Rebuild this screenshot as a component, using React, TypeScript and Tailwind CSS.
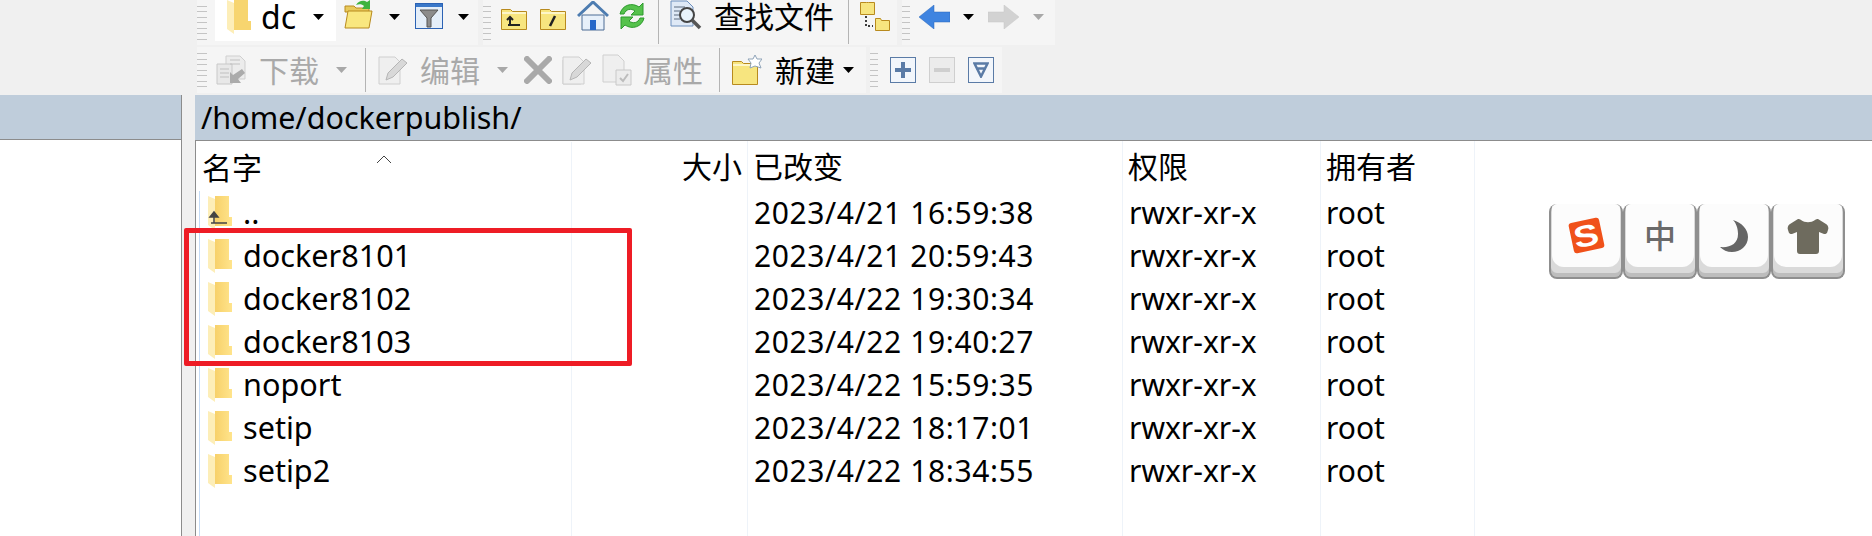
import type { ReactNode } from 'react';

const FONT = "font-['Noto_Sans','Noto_Sans_CJK_SC',sans-serif]";

const files = [
  { name: '..', date: '2023/4/21 16:59:38', up: true },
  { name: 'docker8101', date: '2023/4/21 20:59:43' },
  { name: 'docker8102', date: '2023/4/22 19:30:34' },
  { name: 'docker8103', date: '2023/4/22 19:40:27' },
  { name: 'noport', date: '2023/4/22 15:59:35' },
  { name: 'setip', date: '2023/4/22 18:17:01' },
  { name: 'setip2', date: '2023/4/22 18:34:55' },
];

const COLS = 'grid grid-cols-[376px_176px_375px_198px_154px_1fr]';

function Grip() {
  return (
    <div className="flex h-[34px] w-[10px] shrink-0 flex-col justify-between">
      {[0, 1, 2, 3, 4, 5, 6].map((i) => (
        <div key={i} className="h-px bg-[#c4c4c4]" />
      ))}
    </div>
  );
}

function Caret({ off, className = '' }: { off?: boolean; className?: string }) {
  return (
    <svg width="11" height="6" viewBox="0 0 11 6" className={`shrink-0 ${className}`}>
      <path d="M0 0h11L5.5 6z" fill={off ? '#a8a8a8' : '#000'} />
    </svg>
  );
}

function Sep() {
  return <div className="h-[44px] w-px shrink-0 bg-[#b4b4b4]" />;
}

function ListFolder({ children }: { children?: ReactNode }) {
  return (
    <svg width="24" height="34" viewBox="0 0 24 34" className="shrink-0">
      <defs>
        <linearGradient id="lf" x1="0" y1="0" x2="1" y2="0">
          <stop offset="0" stopColor="#f4c95c" />
          <stop offset="1" stopColor="#ffe48c" />
        </linearGradient>
      </defs>
      <path d="M0 0h21v21h3v9H7V0z" fill="url(#lf)" />
      <path d="M0 0l7 3v31l-7-5z" fill="#fdeeb8" />
      {children}
    </svg>
  );
}

function YellowFolder({ mark }: { mark?: ReactNode }) {
  return (
    <svg width="26" height="24" viewBox="0 0 26 24" className="shrink-0">
      <path d="M.5 3.500h9l2 2h14v18H.5z" fill="#f7e57f" stroke="#b88a1e" />
      <path d="M1 7h24" stroke="#fdf6c8" strokeWidth="2" />
      {mark}
    </svg>
  );
}

function OpenFolder() {
  return (
    <svg width="30" height="29" viewBox="0 0 30 29" className="shrink-0">
      <path d="M1 6h9l2 2h13v4H1z" fill="#e8c95a" stroke="#b88a1e" />
      <path d="M1 28l3-17h24l-3 17z" fill="#f9e77f" stroke="#b88a1e" />
      <path d="M12 5c3-5 8-5 11-3l3-2v9h-8l2-3c-2-2-5-2-8-1z" fill="#3eb33e" />
    </svg>
  );
}

function FilterIcon() {
  return (
    <svg width="28" height="26" viewBox="0 0 28 26" className="shrink-0">
      <rect x=".5" y=".5" width="27" height="25" fill="#e4eef9" stroke="#2b62b4" />
      <path d="M1 1h26v3H1z" fill="#3a78c9" />
      <path d="M5 7h18l-7 8v9h-4v-9z" fill="#8c8c8c" stroke="#555" />
    </svg>
  );
}

function HomeIcon() {
  return (
    <svg width="32" height="30" viewBox="0 0 32 30" className="shrink-0">
      <path d="M5 14h22v15H5z" fill="#e7f0fa" stroke="#4d6d95" />
      <path d="M1 15L16 1l15 14" fill="none" stroke="#4d7cb0" strokeWidth="3" />
      <path d="M13 19h6v10h-6z" fill="#2668c9" />
    </svg>
  );
}

function RefreshIcon() {
  return (
    <svg width="30" height="30" viewBox="0 0 30 30" className="shrink-0">
      <path d="M3 13C5 4 15 1 22 6l4-4v12H14l4-4c-4-3-9-2-11 3z" fill="#55c24c" stroke="#2d9a2d" />
      <path d="M27 17c-2 9-12 12-19 7l-4 4V16h12l-4 4c4 3 9 2 11-3z" fill="#55c24c" stroke="#2d9a2d" />
    </svg>
  );
}

function SearchDoc() {
  return (
    <svg width="32" height="31" viewBox="0 0 32 31" className="shrink-0">
      <path d="M1 1h16l6 6v19H1z" fill="#dfe9f6" stroke="#6d8fbd" />
      <path d="M4 7h11M4 11h6M4 15h5M4 19h6" stroke="#5c6c80" />
      <circle cx="17" cy="15" r="7" fill="#e9f3fb" stroke="#444" strokeWidth="2" />
      <path d="M22 20l8 8" stroke="#555" strokeWidth="3.500" />
    </svg>
  );
}

function TreeIcon() {
  return (
    <svg width="30" height="30" viewBox="0 0 30 30" className="shrink-0">
      <path d="M.5 1.500h6l2 0h6v12H.5z" fill="#f7e57f" stroke="#b88a1e" />
      <path d="M15.500 17.500h5l1 2h8v10h-14z" fill="#f7e57f" stroke="#b88a1e" />
      <path d="M6 15v10h7" fill="none" stroke="#000" strokeDasharray="2 2" strokeWidth="1.500" />
    </svg>
  );
}

function HArrow({ off, flip }: { off?: boolean; flip?: boolean }) {
  return (
    <svg width="31" height="24" viewBox="0 0 31 24" className={`shrink-0 ${flip ? '-scale-x-100' : ''}`}>
      <path
        d="M0 12L15 0v7h16v10H15v7z"
        fill={off ? '#d2d2d2' : '#3f84e0'}
        stroke={off ? '#c6c6c6' : '#2a66b8'}
        strokeWidth=".5"
      />
    </svg>
  );
}

function DownloadIcon() {
  return (
    <svg width="30" height="30" viewBox="0 0 30 30" className="shrink-0">
      <path d="M10 1h14l5 5v18H10z" fill="#ececec" stroke="#cfcfcf" />
      <path d="M1 9h15v20H1z" fill="#e8e8e8" stroke="#c8c8c8" />
      <path d="M4 14h9M4 18h9M4 22h9M14 5h10M14 9h10" stroke="#c0c0c0" />
      <path d="M26 14l3 4-7 6 3 4H14V17l3 3z" fill="#ababab" />
    </svg>
  );
}

function EditIcon({ back }: { back?: boolean }) {
  return (
    <svg width="30" height="29" viewBox="0 0 30 29" className="shrink-0">
      {back && <path d="M1 4v24h18" fill="none" stroke="#cfcfcf" />}
      <path d="M1 1h16l5 5v22H1z" fill="#efefef" stroke="#cfcfcf" />
      <path d="M8 24l2-7L24 3l5 4-14 14z" fill="#d8d8d8" stroke="#b5b5b5" />
    </svg>
  );
}

function PropsIcon() {
  return (
    <svg width="30" height="32" viewBox="0 0 30 32" className="shrink-0">
      <path d="M1 1h15l6 6v21H1z" fill="#efefef" stroke="#cfcfcf" />
      <path d="M14 16h15v15H14z" fill="#ececec" stroke="#c8c8c8" />
      <path d="M18 24l3 3 5-7" fill="none" stroke="#bcbcbc" strokeWidth="2" />
    </svg>
  );
}

function CrossIcon() {
  return (
    <svg width="28" height="28" viewBox="0 0 28 28" className="shrink-0">
      <path d="M3 3l22 22M25 3L3 25" stroke="#a9a9a9" strokeWidth="6" strokeLinecap="round" />
    </svg>
  );
}

function NewFolder() {
  return (
    <svg width="30" height="30" viewBox="0 0 30 30" className="shrink-0">
      <path d="M.5 6.500h9l2 2h14v21H.5z" fill="#f7e57f" stroke="#b88a1e" />
      <path d="M1 10h24" stroke="#fdf6c8" strokeWidth="2" />
      <path d="M23 0l2 4 5 0-3 4 2 5-6-2-5 2 1-5-3-4 5 0z" fill="#fff" stroke="#8ea3b8" />
    </svg>
  );
}

function BoxBtn({ off, children }: { off?: boolean; children: ReactNode }) {
  return (
    <div
      className={`flex h-[26px] w-[26px] shrink-0 items-center justify-center border ${
        off ? 'border-[#cfcfcf] bg-[#ececec]' : 'border-[#5a7ba6] bg-[#f2f6fb]'
      }`}
    >
      {children}
    </div>
  );
}

function KeyCap({ children }: { children: ReactNode }) {
  return (
    <div className="flex h-[75px] w-[74px] shrink-0 items-start justify-center overflow-hidden rounded-[8px] border-x-2 border-b-2 border-[#8f8f8f] bg-[#dadada] shadow-[inset_0_-4px_0_#bdbdbd]">
      <div className="flex h-[63px] w-[68px] items-center justify-center rounded-b-[12px] bg-[#fcfcfc]">{children}</div>
    </div>
  );
}

export default function App() {
  return (
    <div className={`flex h-[536px] w-[1872px] flex-col overflow-hidden bg-[#f0f0f0] text-black ${FONT}`}>
      {/* toolbars */}
      <div className="h-[95px] shrink-0 pl-[197px]">
        <div className="flex h-[47px] items-start">
          <div className="flex h-[45px] w-[281px] items-center bg-[#f5f5f5]">
            <Grip />
            <div className="ml-2 flex h-[41px] w-[121px] -translate-y-[2px] items-start bg-white pl-3">
              <svg width="24" height="34" viewBox="0 0 24 34" className="shrink-0">
                <path d="M0 0h21v21h3v9H7V0z" fill="#f7d56f" />
                <path d="M0 0l7 3v31l-7-5z" fill="#fdeeb8" />
              </svg>
              <span className="ml-[10px] mt-[1px] text-[32px] leading-[32px]">dc</span>
            </div>
            <Caret className="-ml-[23px] -translate-y-[6px]" />
            <div className="ml-[20px] -translate-y-[8px]">
              <OpenFolder />
            </div>
            <Caret className="ml-[15px] -translate-y-[6px]" />
            <div className="ml-[15px] -translate-y-[7px]">
              <FilterIcon />
            </div>
            <Caret className="ml-[15px] -translate-y-[6px]" />
          </div>
          <div className="ml-[5px] flex h-[45px] w-[414px] items-center bg-[#f5f5f5]">
            <div className="w-[8px] overflow-hidden">
              <Grip />
            </div>
            <div className="ml-[10px] -translate-y-[5px]">
              <YellowFolder mark={<path d="M7 19h12M9 11v8M6 14l3-3 3 3" fill="none" stroke="#222" strokeWidth="2" />} />
            </div>
            <div className="ml-[13px] -translate-y-[5px]">
              <YellowFolder mark={<path d="M10 20l5-10" stroke="#222" strokeWidth="2.500" />} />
            </div>
            <div className="ml-[11px] -translate-y-[7px]">
              <HomeIcon />
            </div>
            <div className="ml-[8px] -translate-y-[7px]">
              <RefreshIcon />
            </div>
            <div className="ml-[11px] -translate-y-[1px]">
              <Sep />
            </div>
            <div className="ml-[11px] -translate-y-[7px]">
              <SearchDoc />
            </div>
            <span className="ml-[12px] -translate-y-[6px] text-[30px] leading-[30px]">查找文件</span>
            <div className="ml-[14px] -translate-y-[1px]">
              <Sep />
            </div>
            <div className="ml-[11px] -translate-y-[7px]">
              <TreeIcon />
            </div>
          </div>
          <div className="ml-[5px] flex h-[45px] w-[153px] items-center bg-[#f5f5f5]">
            <div className="w-[8px] overflow-hidden">
              <Grip />
            </div>
            <div className="ml-[9px] -translate-y-[6px]">
              <HArrow />
            </div>
            <Caret className="ml-[13px] -translate-y-[6px]" />
            <div className="ml-[14px] -translate-y-[6px]">
              <HArrow off flip />
            </div>
            <Caret off className="ml-[14px] -translate-y-[6px]" />
          </div>
        </div>
        <div className="flex h-[46px] items-center">
          <div className="flex h-[46px] w-[669px] items-center bg-[#f5f5f5] text-[#a9a9a9]">
            <Grip />
            <div className="ml-[9px]">
              <DownloadIcon />
            </div>
            <span className="ml-[13px] translate-y-[1px] text-[30px] leading-[36px]">下载</span>
            <Caret off className="ml-[17px]" />
            <div className="ml-[18px]">
              <Sep />
            </div>
            <div className="ml-[12px]">
              <EditIcon />
            </div>
            <span className="ml-[12px] translate-y-[1px] text-[30px] leading-[36px]">编辑</span>
            <Caret off className="ml-[17px]" />
            <div className="ml-[16px]">
              <CrossIcon />
            </div>
            <div className="ml-[10px]">
              <EditIcon back />
            </div>
            <div className="ml-[10px]">
              <PropsIcon />
            </div>
            <span className="ml-[11px] translate-y-[1px] text-[30px] leading-[36px]">属性</span>
            <div className="ml-[16px]">
              <Sep />
            </div>
            <div className="ml-[12px]">
              <NewFolder />
            </div>
            <span className="ml-[13px] translate-y-[1px] text-[30px] leading-[36px] text-black">新建</span>
            <Caret className="ml-[8px]" />
          </div>
          <div className="ml-[4px] flex h-[46px] w-[132px] items-center bg-[#f5f5f5]">
            <div className="w-[8px] overflow-hidden">
              <Grip />
            </div>
            <div className="ml-[12px]">
              <BoxBtn>
                <div className="relative h-[16px] w-[16px]">
                  <div className="absolute left-0 top-[6px] h-[4px] w-[16px] bg-[#5a7ba6]" />
                  <div className="absolute left-[6px] top-0 h-[16px] w-[4px] bg-[#5a7ba6]" />
                </div>
              </BoxBtn>
            </div>
            <div className="ml-[13px]">
              <BoxBtn off>
                <div className="h-[4px] w-[16px] bg-[#cfcfcf]" />
              </BoxBtn>
            </div>
            <div className="ml-[13px]">
              <BoxBtn>
                <svg width="16" height="16" viewBox="0 0 16 16">
                  <path d="M1.500 1.500h13L8 14.500zM3 6.500h10" fill="none" stroke="#5a7ba6" strokeWidth="2.500" />
                </svg>
              </BoxBtn>
            </div>
          </div>
        </div>
      </div>

      {/* panes */}
      <div className="flex min-h-0 flex-1">
        <div className="flex w-[182px] shrink-0 flex-col border-r border-[#8c8c8c]">
          <div className="h-[45px] shrink-0 border-b border-[#8c8c8c] bg-[#bfcddb]" />
          <div className="flex-1 bg-white" />
        </div>
        <div className="w-[13px] shrink-0" />
        <div className="relative flex min-w-0 flex-1 flex-col">
          <div className="flex h-[46px] shrink-0 items-center border-b border-[#8c8c8c] bg-[#bfcddb] pl-[6px] text-[30.5px] leading-none">
            /home/dockerpublish/
          </div>
          <div className="flex min-h-0 flex-1 flex-col border-l border-[#8c8c8c] bg-white">
            <div className={`${COLS} h-[50px] shrink-0 items-stretch text-[30px]`}>
              <div className="relative flex translate-y-[1px] items-center border-r border-[#eef3f9] pl-[6px]">
                名字
                <svg width="16" height="9" viewBox="0 0 16 9" className="absolute left-[180px] top-[13px]">
                  <path d="M1 8l7-7 7 7" fill="none" stroke="#444" />
                </svg>
              </div>
              <div className="flex items-center justify-end border-r border-[#eef3f9] pr-[5px]">大小</div>
              <div className="flex items-center border-r border-[#eef3f9] pl-[5px]">已改变</div>
              <div className="flex items-center border-r border-[#eef3f9] pl-[5px]">权限</div>
              <div className="flex items-center border-r border-[#eef3f9] pl-[5px]">拥有者</div>
              <div />
            </div>
            {files.map((f) => (
              <div key={f.name} className={`${COLS} h-[43px] shrink-0 text-[30px] leading-none`}>
                <div className="flex items-center border-r border-[#eef3f9]">
                  <div className="ml-[3px] h-full w-px bg-[#c5dcf7]" />
                  <div className="ml-[8px]">
                    <ListFolder>
                      {f.up && <path d="M3 27h16M6 27V17M2 21l4-5 4 5z" fill="#444" stroke="#444" strokeWidth="1.500" />}
                    </ListFolder>
                  </div>
                  <span className="ml-[11px] text-[30.6px]">{f.name}</span>
                </div>
                <div className="border-r border-[#eef3f9]" />
                <div className="flex items-center border-r border-[#eef3f9] pl-[6px] tracking-[0.6px]">{f.date}</div>
                <div className="flex items-center border-r border-[#eef3f9] pl-[6px]">rwxr-xr-x</div>
                <div className="flex items-center border-r border-[#eef3f9] pl-[5px]">root</div>
                <div />
              </div>
            ))}
            <div className={`${COLS} min-h-0 flex-1`}>
              <div className="border-r border-[#eef3f9]">
                <div className="ml-[3px] h-full w-px bg-[#c5dcf7]" />
              </div>
              <div className="border-r border-[#eef3f9]" />
              <div className="border-r border-[#eef3f9]" />
              <div className="border-r border-[#eef3f9]" />
              <div className="border-r border-[#eef3f9]" />
              <div />
            </div>
          </div>

          {/* red highlight around the three docker folders */}
          <div className="absolute left-[-11px] top-[133px] h-[138px] w-[448px] rounded-[2px] border-[5px] border-[#ee1c25]" />

          {/* floating IME status bar */}
          <div className="absolute left-[1354px] top-[109px] flex">
            <KeyCap>
              <div className="flex h-[31px] w-[31px] -rotate-12 items-center justify-center rounded-[3px] bg-[#f0511a] font-['Liberation_Sans',sans-serif] text-[30px] font-bold leading-none text-white">
                <span className="scale-x-125">S</span>
              </div>
            </KeyCap>
            <KeyCap>
              <span className="text-[32px] font-medium leading-none text-[#6a6a6a]">中</span>
            </KeyCap>
            <KeyCap>
              <svg width="28" height="32" viewBox="0 0 28 32">
                <path d="M13 0C22 3 28 9 28 17c0 9-8 15-16 15-5 0-9-2-12-5 10 1 18-3 18-13 0-6-2-11-5-14z" fill="#666" />
              </svg>
            </KeyCap>
            <KeyCap>
              <svg width="42" height="36" viewBox="0 0 42 36">
                <path d="M11 1c1 0 2 0 3 1 4 3 10 3 14 0 1-1 2-1 3-1l8 5c2 1 3 4 2 6l-1 3c-1 1-2 1-3 1l-5-2v19q0 3-3 3H13q-3 0-3-3V14l-5 2c-1 0-2 0-3-1l-1-3c-1-2 0-5 2-6z" fill="#6e6b5e" />
              </svg>
            </KeyCap>
          </div>
        </div>
      </div>
    </div>
  );
}
